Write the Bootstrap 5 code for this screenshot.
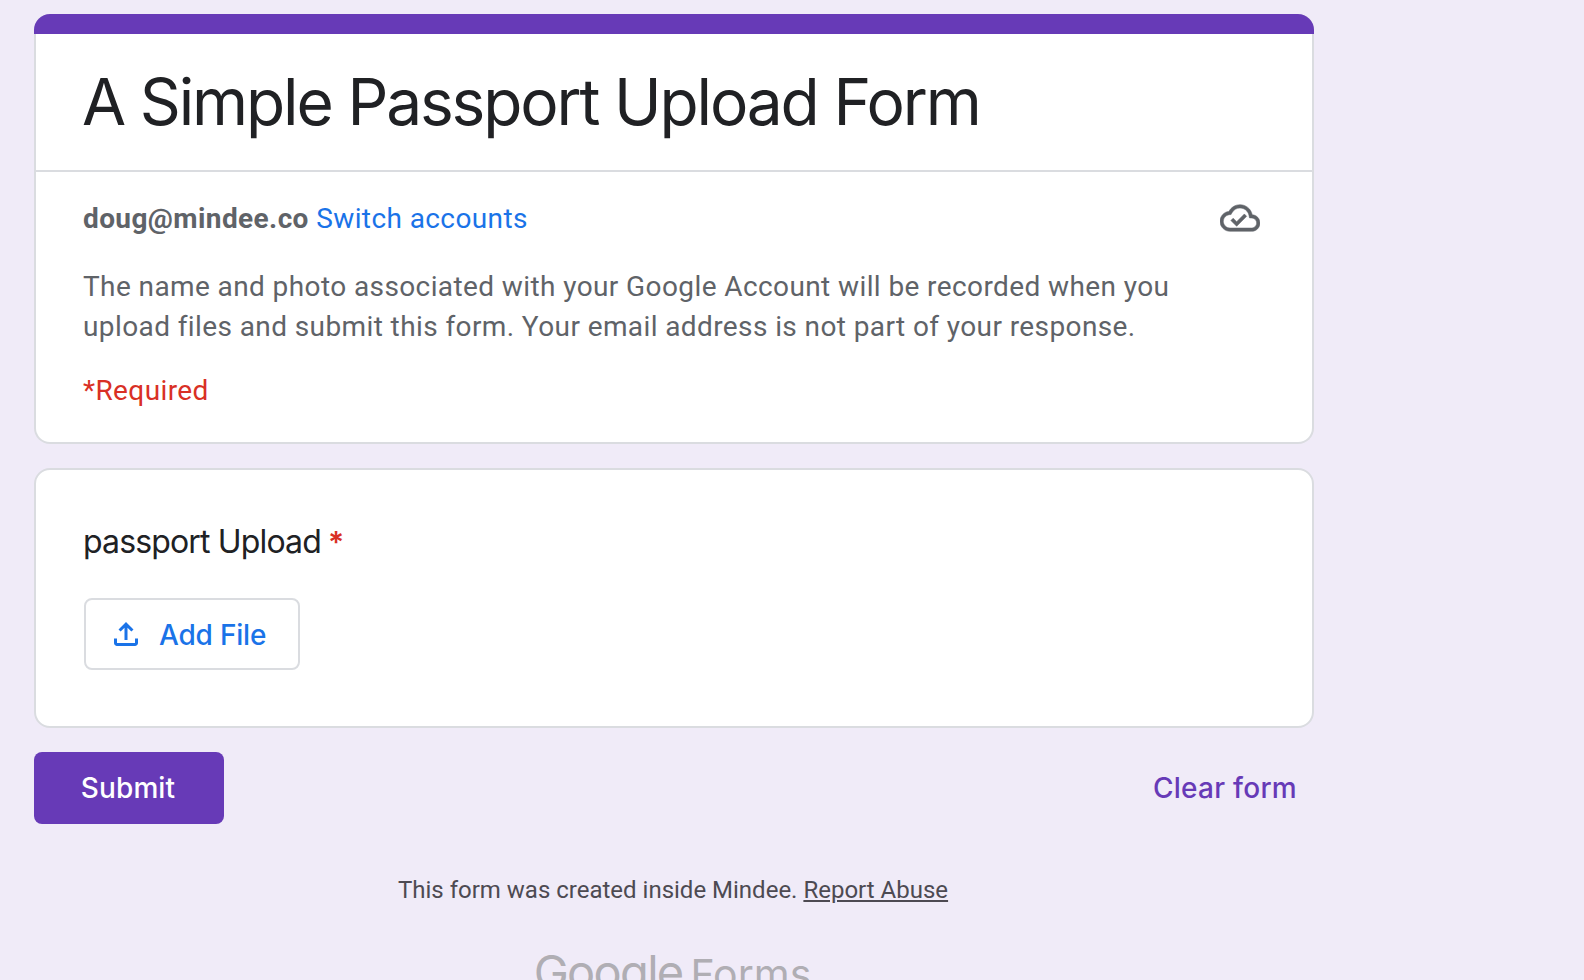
<!DOCTYPE html>
<html lang="en"><head><meta charset="utf-8"><title>A Simple Passport Upload Form</title>
<link href="https://cdn.jsdelivr.net/npm/bootstrap@5.3.0/dist/css/bootstrap.min.css" rel="stylesheet">
<style>
html,body{height:100%;overflow:hidden}
body{background:#f0ebf8;font-family:Roboto,sans-serif;color:#202124}
.shell{width:1280px;margin-left:34px;padding-top:14px}
.sheet{background:#fff;border:2px solid #dadce0;border-radius:16px}
.sheet-top{border-top:0}
.band{height:20px;background:#673ab7;margin:0 -2px;border-radius:16px 16px 0 0}
.title-box{padding:30px 47px 28px;border-bottom:2px solid #dadce0;height:138px}
.title-text{font-family:Inter,sans-serif;font-size:64px;line-height:76px;margin:0 0 0 -1px;font-weight:400;letter-spacing:-2.15px;white-space:nowrap}
.info-box{padding:28px 47px 0;height:270px}
.acct{font-size:28px;line-height:36px;letter-spacing:.4px;color:#5f6368}
.acct a{color:#1a73e8;text-decoration:none}
.acct-mail{font-weight:700;letter-spacing:.4px}
.note{font-size:28px;line-height:40px;letter-spacing:.4px;color:#5f6368;margin:29px 0 0}
.req{font-size:28px;line-height:40px;color:#d93025;margin:24px 0 0;letter-spacing:.4px}
.sheet-q{margin-top:24px;height:260px;padding:50px 47px 0}
.q-label{font-family:Inter,sans-serif;font-size:32px;line-height:44px;letter-spacing:-.85px;white-space:nowrap}
.q-star{color:#d93025;font-weight:600;font-size:30px;margin-left:-1px}
.add-btn{margin:34px 0 0 1px;width:216px;height:72px;border:2px solid #dadce0;border-radius:8px;background:#fff;color:#1a73e8;font-family:Inter,sans-serif;font-size:28px;font-weight:500;padding:1px 0 0 22px;letter-spacing:-.2px}
.add-btn svg{width:36px;height:36px;fill:#1a73e8;margin:-1px 15px 0 0}
.foot-row{margin-top:24px}
.send-btn{width:190px;height:72px;background:#673ab7;border:0;border-radius:8px;color:#fff;font-family:Inter,sans-serif;font-size:28px;font-weight:500;padding:0 2px 0 0;letter-spacing:.1px}
.clear-link{color:#673ab7;font-family:Inter,sans-serif;font-size:28px;font-weight:500;margin-right:17px;text-decoration:none;letter-spacing:.27px}
.made{font-size:24px;line-height:32px;color:#4d4a52;text-align:center;margin-top:50px;padding-right:2px}
.made a{color:inherit}
.brand{text-align:center;margin-top:40px;padding-right:3px;font-family:Inter,sans-serif;line-height:52px;color:#b0aeb4;white-space:nowrap}
.brand-g{font-size:47px;letter-spacing:-1.7px;margin-right:8px}
.brand-f{font-size:41px}
.cloud{width:40px;height:40px;fill:#5f6368;stroke:#5f6368;stroke-width:.3;margin:-2px 5px 0 0}
</style></head><body>
<div class="shell">
  <div class="sheet sheet-top">
    <div class="band"></div>
    <div class="title-box"><h1 class="title-text">A Simple Passport Upload Form</h1></div>
    <div class="info-box">
      <div class="d-flex justify-content-between align-items-center">
        <div class="acct"><span class="acct-mail">doug@mindee.co</span> <a href="#">Switch accounts</a></div>
        <svg class="cloud" viewBox="0 0 24 24"><path d="M19.35 10.04C18.67 6.59 15.64 4 12 4 9.11 4 6.6 5.64 5.35 8.04 2.34 8.36 0 10.91 0 14c0 3.31 2.69 6 6 6h13c2.76 0 5-2.24 5-5 0-2.64-2.05-4.78-4.65-4.96zM19 18H6c-2.21 0-4-1.79-4-4 0-2.05 1.53-3.76 3.56-3.97l1.07-.11.5-.95C8.08 7.14 9.94 6 12 6c2.62 0 4.88 1.86 5.39 4.43l.3 1.5 1.53.11c1.56.1 2.78 1.41 2.78 2.96 0 1.65-1.35 3-3 3zm-9-3.82l-2.09-2.09L6.5 13.5 10 17l6.01-6.01-1.41-1.41z"/></svg>
      </div>
      <p class="note">The name and photo associated with your Google Account will be recorded when you<br>upload files and submit this form. Your email address is not part of your response.</p>
      <p class="req">*Required</p>
    </div>
  </div>
  <div class="sheet sheet-q">
    <div class="q-label">passport Upload <span class="q-star">*</span></div>
    <button type="button" class="btn add-btn d-flex align-items-center"><svg viewBox="0 0 24 24"><path d="M18 15v3H6v-3H4v3c0 1.1.9 2 2 2h12c1.1 0 2-.9 2-2v-3h-2zM7 9l1.41 1.41L11 7.83V16h2V7.83l2.59 2.58L17 9l-5-5-5 5z"/></svg>Add File</button>
  </div>
  <div class="foot-row d-flex justify-content-between align-items-center">
    <button type="button" class="btn send-btn">Submit</button>
    <a href="#" class="clear-link">Clear form</a>
  </div>
  <div class="made">This form was created inside Mindee. <a href="#">Report Abuse</a></div>
  <div class="brand"><span class="brand-g">Google</span><span class="brand-f">Forms</span></div>
</div>
</body></html>
